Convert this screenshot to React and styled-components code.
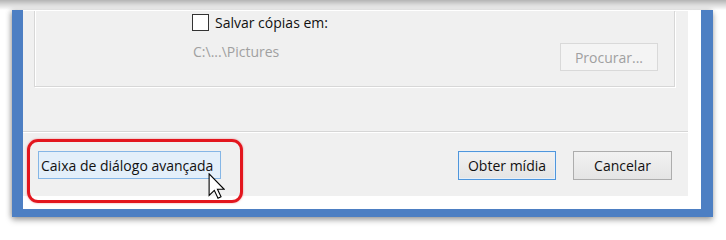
import React from 'react'
import styled, { createGlobalStyle } from 'styled-components'

const GlobalStyle = createGlobalStyle`
  html, body {
    margin: 0;
    padding: 0;
    background: #ffffff;
  }
  body {
    font-family: "Open Sans", "Liberation Sans", sans-serif;
  }
`

const Page = styled.div`
  width: 726px;
  height: 232px;
  overflow: hidden;
  display: flex;
  flex-direction: column;
  background: #ffffff;
`

const TopShade = styled.div`
  height: 10px;
  flex: none;
  background: linear-gradient(to bottom, #b4b4b4 0%, #d8d8d8 45%, #f4f4f4 85%, #ffffff 100%);
`

const WindowFrame = styled.div`
  margin-left: 12px;
  width: 701px;
  height: 207px;
  box-sizing: border-box;
  border-left: 11px solid #4d7fc3;
  border-right: 12px solid #4d7fc3;
  border-bottom: 8px solid #4d7fc3;
  box-shadow: 0 3px 6px rgba(0, 0, 0, 0.35), -2px 0 5px rgba(0, 0, 0, 0.15);
  background: #ffffff;
  padding: 1px 13px 13px 0;
  display: flex;
`

const Panel = styled.div`
  flex: 1;
  background: #f0f0f0;
  display: flex;
  flex-direction: column;
`

const GroupBox = styled.div`
  margin: 0 13px 0 11px;
  height: 76px;
  box-sizing: border-box;
  border: 1px solid #d7d7d7;
  border-top: none;
  box-shadow: 1px 1px 0 #ffffff, inset 1px 0 0 #ffffff;
  padding: 3px 16px 0 157px;
  display: flex;
  flex-direction: column;
`

const CheckRow = styled.label`
  display: flex;
  align-items: center;
  gap: 6px;
  height: 17px;
  font-size: 14px;
  color: #111111;
`

const CheckBox = styled.span`
  width: 17px;
  height: 17px;
  box-sizing: border-box;
  border: 1px solid #333333;
  background: #ffffff;
  flex: none;
`

const PathRow = styled.div`
  margin-top: 12px;
  display: flex;
  align-items: flex-start;
  justify-content: space-between;
`

const PathText = styled.span`
  font-size: 14px;
  color: #a0a0a0;
  padding: 0 0 0 1px;
  line-height: 18px;
`

const Button = styled.button`
  width: ${p => p.$w}px;
  height: ${p => p.$h || 29}px;
  box-sizing: border-box;
  padding: 0;
  font-family: "Open Sans", "Liberation Sans", sans-serif;
  font-size: 14px;
  color: #111111;
  border: 1px solid #adadad;
  background: linear-gradient(to bottom, #f2f2f2, #e4e4e4);
  white-space: nowrap;
  flex: none;
  cursor: default;
`

const DisabledButton = styled(Button)`
  color: #a0a0a0;
  border-color: #d9d9d9;
  background: #f4f4f4;
`

const DefaultButton = styled(Button)`
  border-color: #4f96dc;
  box-shadow: inset 0 0 0 1px #e6f0fa;
`

const HoverButton = styled(Button)`
  border-color: #85b6e6;
  background: #e3effa;
  text-align: left;
  padding-left: 2px;
`

const Separator = styled.div`
  margin-top: 44px;
  height: 1px;
  background: #d6d6d6;
  box-shadow: 0 1px 0 #ffffff;
`

const Footer = styled.div`
  position: relative;
  flex: 1;
  display: flex;
  align-items: flex-start;
  padding: 19px 16px 0 15px;
`

const Spacer = styled.div`
  flex: 1;
`

const ButtonGroup = styled.div`
  display: flex;
  gap: 17px;
`

const Highlight = styled.div`
  position: absolute;
  left: 4px;
  top: 7px;
  width: 216px;
  height: 64px;
  box-sizing: border-box;
  border: 3px solid #e3161e;
  border-radius: 11px;
  box-shadow: 0 0 2px rgba(227, 22, 30, 0.5);
  pointer-events: none;
`

const Pointer = styled.svg`
  position: absolute;
  left: 185px;
  top: 41px;
  pointer-events: none;
`

export default function App() {
  return (
    <>
      <GlobalStyle />
      <Page>
        <TopShade />
        <WindowFrame>
          <Panel>
            <GroupBox>
              <CheckRow>
                <CheckBox />
                Salvar cópias em:
              </CheckRow>
              <PathRow>
                <PathText>C:\...\Pictures</PathText>
                <DisabledButton $w={98} $h={28} disabled>Procurar...</DisabledButton>
              </PathRow>
            </GroupBox>
            <Separator />
            <Footer>
              <HoverButton $w={183} $h={28}>Caixa de diálogo avançada</HoverButton>
              <Spacer />
              <ButtonGroup>
                <DefaultButton $w={98}>Obter mídia</DefaultButton>
                <Button $w={99}>Cancelar</Button>
              </ButtonGroup>
              <Highlight />
              <Pointer width="17" height="26" viewBox="0 0 12 19">
                <path
                  d="M0.6 0.6 L0.6 16.4 L4.4 12.7 L7.1 18.4 L9.3 17.4 L6.7 11.9 L11.6 11.9 Z"
                  fill="#ffffff"
                  stroke="#000000"
                  strokeWidth="0.8"
                  strokeLinejoin="miter"
                />
              </Pointer>
            </Footer>
          </Panel>
        </WindowFrame>
      </Page>
    </>
  )
}
